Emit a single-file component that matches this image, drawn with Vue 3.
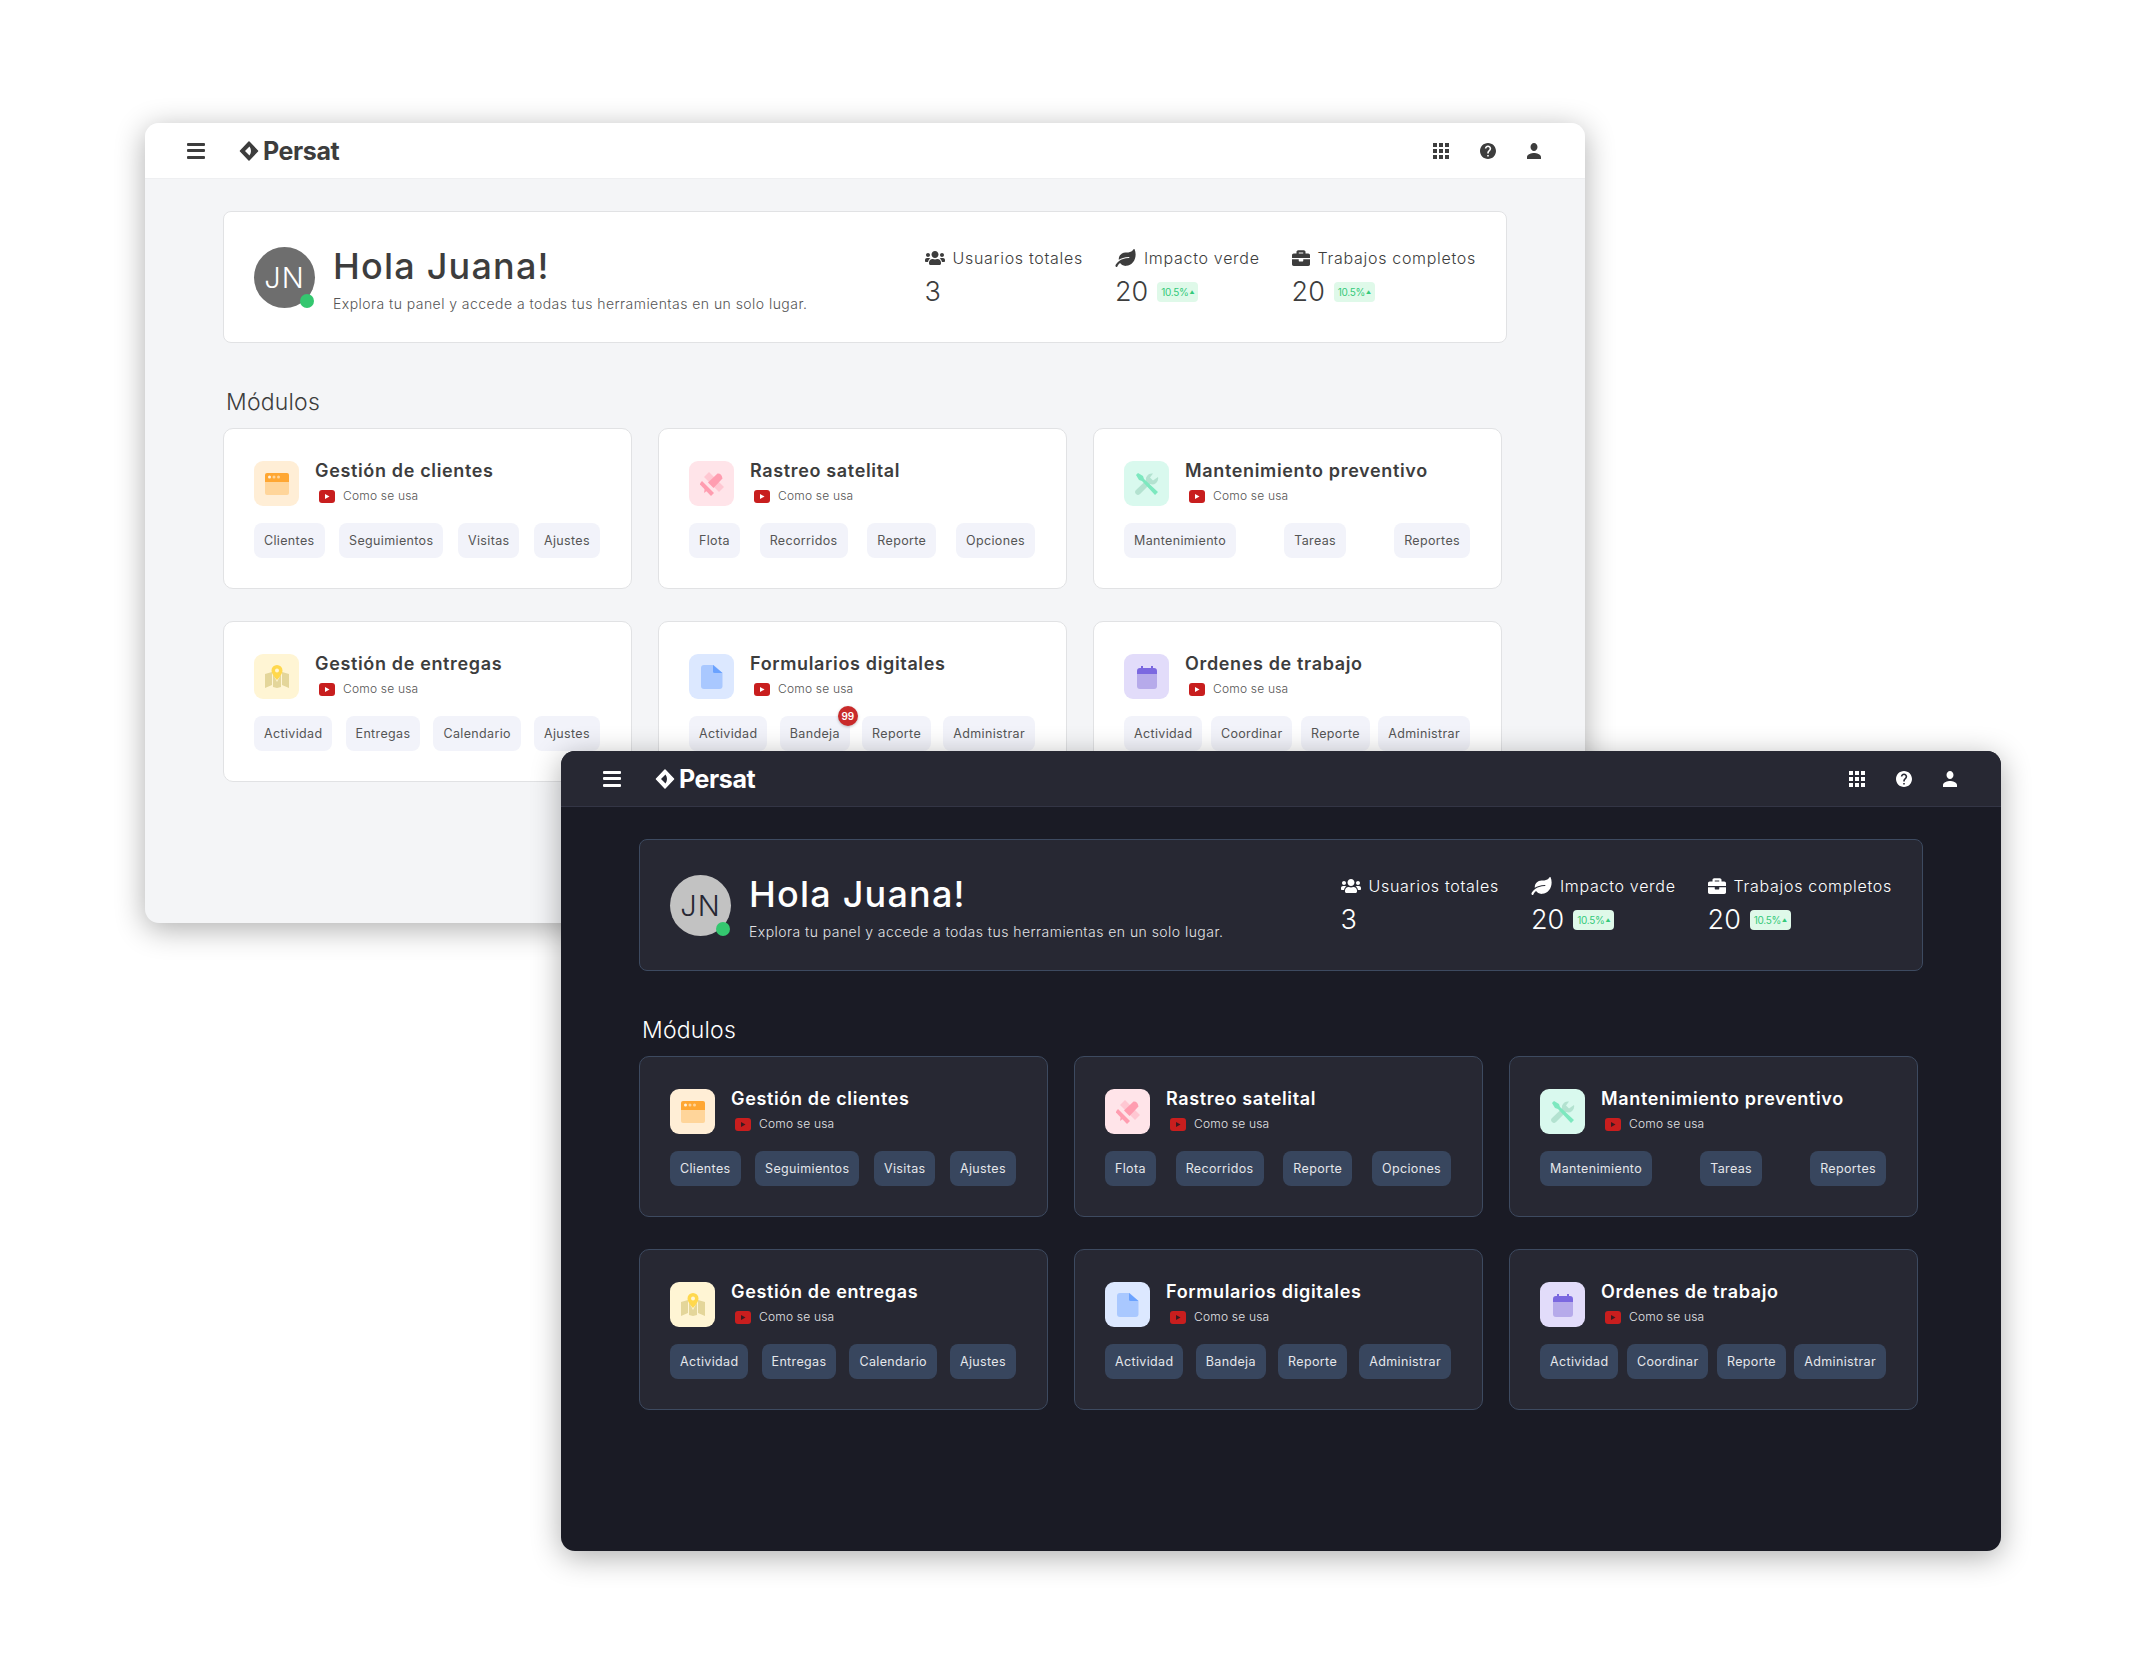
<template>
  <div class="canvas">
    <section v-for="theme in themes" :key="theme" :class="['window', theme]">
      <header class="topbar">
        <button class="menu-btn" aria-label="Menu">
          <span></span><span></span><span></span>
        </button>
        <div class="logo">
          <svg class="logo-mark" viewBox="0 0 20 20">
            <path d="M10 1l8.500 9-8.500 9-8.500-9z" fill="currentColor" stroke="currentColor" stroke-width="1.500" stroke-linejoin="round" />
            <path d="M6 10l4.500-4.500c1 1.500 1.500 3 1.500 4.500s-.5 3-1.500 4.500z" class="logo-cut" />
          </svg>
          <span class="logo-text">Persat</span>
        </div>
        <div class="top-actions">
          <svg class="top-icon" viewBox="4 4 16 16"><path :d="paths.apps" /></svg>
          <svg class="top-icon" viewBox="2 2 20 20"><path :d="paths.help" /></svg>
          <svg class="top-icon person" viewBox="4 4 16 16" preserveAspectRatio="none"><path :d="paths.person" /></svg>
        </div>
      </header>

      <main class="content">
        <div class="hero">
          <div class="hero-left">
            <div class="avatar">
              JN
              <span class="status"></span>
            </div>
            <div class="greeting">
              <h1>Hola Juana!</h1>
              <p>Explora tu panel y accede a todas tus herramientas en un solo lugar.</p>
            </div>
          </div>
          <div class="stats">
            <div v-for="stat in stats" :key="stat.label" class="stat">
              <div class="stat-label">
                <svg :viewBox="stat.box" :class="['stat-icon', stat.cls]"><path :d="stat.d" /></svg>
                <span>{{ stat.label }}</span>
              </div>
              <div class="stat-value">
                <span>{{ stat.value }}</span>
                <span v-if="stat.badge" class="trend">10.5%<i>▲</i></span>
              </div>
            </div>
          </div>
        </div>

        <h2>Módulos</h2>

        <div class="modules">
          <article v-for="mod in modules" :key="mod.name" class="module">
            <div class="module-head">
              <div class="module-icon" :style="{ background: mod.bg }">
                <svg viewBox="0 0 24 24">
                  <path v-for="(p, i) in mod.icon" :key="i" :d="p.d" :fill="p.fill" />
                </svg>
              </div>
              <div>
                <h3>{{ mod.name }}</h3>
                <div class="howto">
                  <svg viewBox="0 0 16 13">
                    <rect width="16" height="13" rx="3" fill="#c81e1e" />
                    <path d="M6 4l4.500 2.500L6 9z" class="play" />
                  </svg>
                  <span>Como se usa</span>
                </div>
              </div>
            </div>
            <div class="chips">
              <span v-for="chip in mod.chips" :key="chip" class="chip">
                {{ chip }}
                <b v-if="chip === 'Bandeja' && theme === 'light'" class="count">99</b>
              </span>
            </div>
          </article>
        </div>
      </main>
    </section>
  </div>
</template>

<script setup>
const themes = ['light', 'dark']

const paths = {
  apps: 'M4 8h4V4H4v4zm6 12h4v-4h-4v4zm-6 0h4v-4H4v4zm0-6h4v-4H4v4zm6 0h4v-4h-4v4zm6-10v4h4V4h-4zm-6 4h4V4h-4v4zm6 6h4v-4h-4v4zm0 6h4v-4h-4v4z',
  help: 'M12 2C6.48 2 2 6.48 2 12s4.48 10 10 10 10-4.48 10-10S17.52 2 12 2zm1 17h-2v-2h2v2zm2.070-7.750l-.9.920C13.450 12.900 13 13.500 13 15h-2v-.5c0-1.100.450-2.100 1.170-2.830l1.240-1.260c.370-.360.590-.860.590-1.410 0-1.100-.9-2-2-2s-2 .9-2 2H8c0-2.210 1.790-4 4-4s4 1.790 4 4c0 .880-.360 1.680-.930 2.250z',
  person: 'M12 12c2.210 0 4-1.790 4-4s-1.790-4-4-4-4 1.790-4 4 1.790 4 4 4zm0 2c-2.670 0-8 1.340-8 4v2h16v-2c0-2.660-5.330-4-8-4z'
}

const stats = [
  {
    label: 'Usuarios totales',
    value: '3',
    box: '0 0 640 512',
    cls: 'users',
    d: 'M96 224c35.300 0 64-28.700 64-64s-28.700-64-64-64-64 28.700-64 64 28.700 64 64 64zm448 0c35.300 0 64-28.700 64-64s-28.700-64-64-64-64 28.700-64 64 28.700 64 64 64zm32 32h-64c-17.600 0-33.500 7.100-45.100 18.600 40.300 22.100 68.900 62 75.100 109.400h66c17.700 0 32-14.300 32-32v-32c0-35.300-28.700-64-64-64zm-256 0c61.900 0 112-50.100 112-112S381.900 32 320 32 208 82.100 208 144s50.100 112 112 112zm76.800 32h-8.300c-20.800 10-43.900 16-68.500 16s-47.600-6-68.500-16h-8.300C179.600 288 128 339.600 128 403.200V432c0 26.500 21.500 48 48 48h288c26.500 0 48-21.500 48-48v-28.800c0-63.600-51.600-115.200-115.200-115.200zm-223.700-13.400C161.500 263.100 145.600 256 128 256H64c-35.300 0-64 28.700-64 64v32c0 17.700 14.300 32 32 32h65.900c6.300-47.400 34.900-87.300 75.200-109.400z'
  },
  {
    label: 'Impacto verde',
    value: '20',
    badge: true,
    box: '0 0 576 512',
    cls: 'leaf',
    d: 'M546.200 9.700c-5.600-12.500-21.600-13-28.300-1.200C486.900 62.400 431.400 96 368 96h-80C182 96 96 182 96 288c0 7 .8 13.700 1.500 20.500C161.300 262.800 253.400 224 384 224c8.800 0 16 7.200 16 16s-7.200 16-16 16C132.600 256 26 410.100 2.400 468c-6.600 16.300 1.200 34.900 17.500 41.600 16.400 6.800 35-1.100 41.800-17.300 1.500-3.600 20.900-47.900 71.900-90.600 32.400 43.900 94 85.800 174.900 77.200C465.500 467.500 576 326.700 576 154.300c0-50.200-10.800-102.200-29.800-144.600z'
  },
  {
    label: 'Trabajos completos',
    value: '20',
    badge: true,
    box: '0 0 512 512',
    cls: 'case',
    d: 'M320 336c0 8.840-7.160 16-16 16h-96c-8.840 0-16-7.160-16-16v-48H0v144c0 25.600 22.400 48 48 48h416c25.600 0 48-22.400 48-48V288H320v48zm144-208h-80V80c0-25.600-22.400-48-48-48H176c-25.600 0-48 22.400-48 48v48H48c-25.600 0-48 22.400-48 48v80h512v-80c0-25.600-22.400-48-48-48zm-144 0H192V96h128v32z'
  }
]

const modules = [
  {
    name: 'Gestión de clientes',
    bg: '#ffeed6',
    chips: ['Clientes', 'Seguimientos', 'Visitas', 'Ajustes'],
    icon: [
      { d: 'M0 10h24v11a2 2 0 0 1-2 2H2a2 2 0 0 1-2-2z', fill: '#ffd59a' },
      { d: 'M2 1h20a2 2 0 0 1 2 2v7H0V3a2 2 0 0 1 2-2z', fill: '#ffa733' },
      { d: 'M4.500 3.500a1.500 1.500 0 1 0 0 3 1.500 1.500 0 0 0 0-3z', fill: '#fff3df' },
      { d: 'M9 3.500a1.500 1.500 0 1 0 0 3 1.500 1.500 0 0 0 0-3z', fill: '#ffd59a' },
      { d: 'M13.500 3.500a1.500 1.500 0 1 0 0 3 1.500 1.500 0 0 0 0-3z', fill: '#ffd59a' }
    ]
  },
  {
    name: 'Rastreo satelital',
    bg: '#ffe4e9',
    chips: ['Flota', 'Recorridos', 'Reporte', 'Opciones'],
    icon: [
      { d: 'M4 5l5-5 15 15-5 5z', fill: '#ffc7d2' },
      { d: 'M17.500 1.500q4-.5 5 5L13.500 16l-5.500-5.500z', fill: '#ff9db0' },
      { d: 'M2 9l12 12-3 3L-.5 12z', fill: '#ff9db0' },
      { d: 'M5 15l3 3-4 3z', fill: '#ff9db0' }
    ]
  },
  {
    name: 'Mantenimiento preventivo',
    bg: '#d9f9ee',
    chips: ['Mantenimiento', 'Tareas', 'Reportes'],
    icon: [
      { d: 'M23 5a6 6 0 0 1-8 7L5 22a2.500 2.500 0 0 1-4-4L11 8.500a6 6 0 0 1 7-7l-3 4 3 3z', fill: '#b3e2d0' },
      { d: 'M1 3l2-2 5 3 1 3 14 13-3 3L7 9 4 8z', fill: '#7de8bf' }
    ]
  },
  {
    name: 'Gestión de entregas',
    bg: '#fff5d4',
    chips: ['Actividad', 'Entregas', 'Calendario', 'Ajustes'],
    icon: [
      { d: 'M0 9l7-2v13l-7 3z', fill: '#e4d69a' },
      { d: 'M8 9l4 8 4-8v13l-4 1-4-1z', fill: '#e4d69a' },
      { d: 'M17 7l7 2v14l-7-3z', fill: '#e4d69a' },
      { d: 'M12 0a5.500 5.500 0 0 0-5.500 5.500C6.500 9.500 12 15 12 15s5.500-5.500 5.500-9.500A5.500 5.500 0 0 0 12 0zm0 3.500a2 2 0 1 1 0 4 2 2 0 0 1 0-4z', fill: '#ffd84d' }
    ]
  },
  {
    name: 'Formularios digitales',
    bg: '#dce8ff',
    chips: ['Actividad', 'Bandeja', 'Reporte', 'Administrar'],
    icon: [
      { d: 'M4 0h9.500l9 8v13a3 3 0 0 1-3 3H4a3 3 0 0 1-3-3V3a3 3 0 0 1 3-3z', fill: '#a9c8ff' },
      { d: 'M13 0l9.500 8H14.500a1.500 1.500 0 0 1-1.500-1.500z', fill: '#6aa2ff' }
    ]
  },
  {
    name: 'Ordenes de trabajo',
    bg: '#e2dcfa',
    chips: ['Actividad', 'Coordinar', 'Reporte', 'Administrar'],
    icon: [
      { d: 'M2 9h20v12a3 3 0 0 1-3 3H5a3 3 0 0 1-3-3z', fill: '#b6aaea' },
      { d: 'M5 3h1V1h2v2h8V1h2v2h1a3 3 0 0 1 3 3v3H2V6a3 3 0 0 1 3-3z', fill: '#7b68e0' }
    ]
  }
]
</script>

<style scoped>
.canvas {
  position: relative;
  width: 2146px;
  height: 1674px;
  overflow: hidden;
  background: #fff;
  font-family: Inter, "Liberation Sans", sans-serif;
}

.window {
  position: absolute;
  width: 1440px;
  height: 800px;
  border-radius: 14px;
  overflow: hidden;
  background: var(--page);
  color: var(--text);
  box-shadow: 0 6px 30px rgba(0, 0, 0, 0.32);
}

.light {
  left: 145px;
  top: 123px;
  --page: #f4f5f7;
  --bar: #fff;
  --bar-line: #eeeff1;
  --panel: #fff;
  --line: #e1e2e4;
  --text: #3d3d3d;
  --soft: #555;
  --chip: #f2f3fa;
  --chip-text: #555;
  --avatar: #6e6e6e;
  --avatar-text: #fff;
  --play: #fff;
}

.dark {
  left: 561px;
  top: 751px;
  --page: #1a1b25;
  --bar: #272833;
  --bar-line: #333545;
  --panel: #272833;
  --line: #3d4a60;
  --text: #fff;
  --soft: #e2e3e6;
  --chip: #38465e;
  --chip-text: #e5e7eb;
  --avatar: #c2c2c2;
  --avatar-text: #272833;
  --play: #3a1a20;
}

.topbar {
  display: flex;
  align-items: center;
  height: 56px;
  padding: 0 44px 0 42px;
  box-sizing: border-box;
  background: var(--bar);
  border-bottom: 1px solid var(--bar-line);
}

.menu-btn {
  display: flex;
  flex-direction: column;
  justify-content: space-between;
  width: 18px;
  height: 16px;
  padding: 0;
  border: 0;
  background: none;
}

.menu-btn span {
  height: 3px;
  border-radius: 1px;
  background: var(--text);
}

.logo {
  display: flex;
  align-items: center;
  gap: 4px;
  margin-left: 34px;
}

.logo-mark {
  width: 20px;
  height: 20px;
  color: var(--text);
}

.logo-cut {
  fill: var(--bar);
}

.logo-text {
  font-size: 25px;
  font-weight: 700;
  letter-spacing: -0.4px;
  line-height: 28px;
}

.top-actions {
  display: flex;
  align-items: center;
  gap: 31px;
  margin-left: auto;
}

.top-icon {
  width: 16px;
  height: 16px;
  fill: var(--text);
}

.top-icon.person {
  width: 14px;
}

.content {
  padding: 32px 78px 0;
}

.hero {
  display: flex;
  align-items: center;
  justify-content: space-between;
  height: 132px;
  padding: 0 30px;
  box-sizing: border-box;
  background: var(--panel);
  border: 1px solid var(--line);
  border-radius: 8px;
}

.hero-left {
  display: flex;
  align-items: center;
  gap: 18px;
}

.avatar {
  position: relative;
  display: flex;
  align-items: center;
  justify-content: center;
  width: 61px;
  height: 61px;
  border-radius: 50%;
  background: var(--avatar);
  color: var(--avatar-text);
  font-size: 29px;
  font-weight: 300;
  letter-spacing: 1px;
}

.status {
  position: absolute;
  right: 1px;
  bottom: 0;
  width: 14px;
  height: 14px;
  border-radius: 50%;
  background: #34c76f;
}

.greeting {
  padding-top: 5px;
}

h1 {
  margin: 0;
  font-size: 36px;
  font-weight: 500;
  line-height: 42px;
  letter-spacing: 1.2px;
}

.hero p {
  margin: 7px 0 0;
  font-size: 14px;
  font-weight: 300;
  line-height: 20px;
  letter-spacing: 0.45px;
  color: var(--soft);
}

.stats {
  display: flex;
  gap: 32px;
}

.stat-label {
  display: flex;
  align-items: center;
  gap: 8px;
  font-size: 16px;
  font-weight: 300;
  line-height: 20px;
  letter-spacing: 0.7px;
}

.stat-icon {
  height: 16px;
  fill: var(--text);
}

.stat-icon.users {
  width: 20px;
}

.stat-icon.leaf {
  width: 21px;
  height: 18px;
}

.stat-icon.case {
  width: 18px;
  height: 18px;
}

.stat-value {
  display: flex;
  align-items: center;
  gap: 9px;
  margin-top: 9px;
  font-size: 27px;
  font-weight: 300;
  line-height: 30px;
}

.trend {
  display: flex;
  align-items: center;
  justify-content: center;
  gap: 1px;
  width: 41px;
  height: 20px;
  border-radius: 4px;
  background: #dff9e9;
  color: #34c97a;
  font-size: 10px;
  font-weight: 400;
  letter-spacing: -0.3px;
  line-height: 20px;
}

.trend i {
  font-size: 5px;
  font-style: normal;
}

h2 {
  margin: 45px 0 12px;
  padding-left: 3px;
  font-size: 23px;
  font-weight: 300;
  line-height: 28px;
  letter-spacing: 0.2px;
}

.modules {
  display: grid;
  grid-template-columns: repeat(3, 409px);
  gap: 32px 26px;
}

.module {
  height: 161px;
  padding: 32px 31px 0 30px;
  box-sizing: border-box;
  background: var(--panel);
  border: 1px solid var(--line);
  border-radius: 10px;
}

.module-head {
  display: flex;
  gap: 16px;
}

.module-icon {
  display: flex;
  align-items: center;
  justify-content: center;
  flex: none;
  width: 45px;
  height: 45px;
  border-radius: 9px;
}

.module-icon svg {
  width: 24px;
  height: 24px;
}

h3 {
  margin: 0;
  font-size: 18px;
  font-weight: 600;
  line-height: 20px;
  letter-spacing: 0.65px;
}

.howto {
  display: flex;
  align-items: center;
  gap: 8px;
  margin: 8px 0 0 4px;
  font-size: 12px;
  font-weight: 300;
  line-height: 14px;
  letter-spacing: 0.2px;
  color: var(--soft);
}

.howto svg {
  width: 16px;
  height: 13px;
}

.play {
  fill: var(--play);
}

.chips {
  display: flex;
  justify-content: space-between;
  margin-top: 17px;
}

.chip {
  position: relative;
  padding: 0 10px;
  border-radius: 8px;
  background: var(--chip);
  color: var(--chip-text);
  font-size: 12.5px;
  line-height: 35px;
  letter-spacing: 0.35px;
}

.count {
  position: absolute;
  top: -10px;
  right: -8px;
  width: 20px;
  height: 20px;
  border-radius: 50%;
  background: #c92a2a;
  color: #fff;
  font-size: 10px;
  font-weight: 600;
  line-height: 20px;
  text-align: center;
  letter-spacing: 0;
  box-shadow: 0 1px 3px rgba(0, 0, 0, 0.25);
}
</style>
